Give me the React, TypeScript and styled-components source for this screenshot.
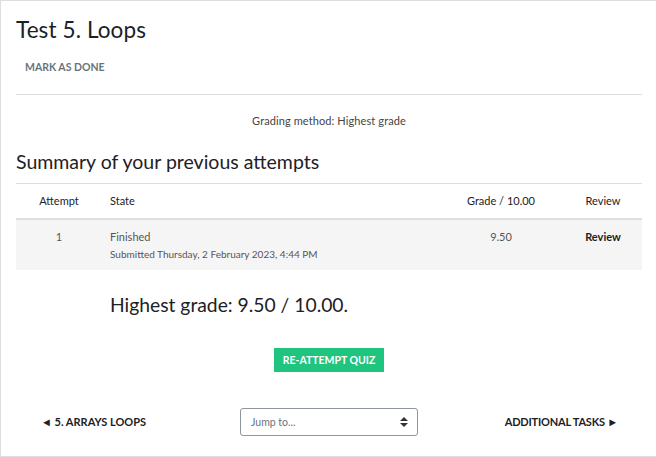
import React from "react";
import styled, { createGlobalStyle } from "styled-components";

const Global = createGlobalStyle`
  html, body { margin: 0; padding: 0; background: #fff; overflow: hidden; }
  body { font-family: Lato, "Open Sans", sans-serif; color: #1d2125; }
`;

const Page = styled.div`
  box-sizing: border-box;
  width: 656px;
  height: 457px;
  border: 1px solid #dedede;
  border-right: none;
  padding: 0 14px 0 15px;
  display: flex;
  flex-direction: column;
`;

const Title = styled.h2`
  margin: 15px 0 0;
  font-size: 22.5px;
  font-weight: 400;
  line-height: 28px;
  letter-spacing: 0.1px;
`;

const DoneButton = styled.button`
  align-self: flex-start;
  margin-top: 13px;
  border: none;
  background: transparent;
  padding: 4px 9px;
  font-family: inherit;
  font-size: 10.5px;
  font-weight: 700;
  color: #6a737b;
  text-transform: uppercase;
`;

const Rule = styled.hr`
  margin: 17px 0 0;
  border: none;
  border-top: 1px solid #dedede;
`;

const Method = styled.p`
  margin: 19px 0 0;
  text-align: center;
  font-size: 11px;
  color: #444;
  line-height: 14px;
  letter-spacing: 0.1px;
`;

const SubTitle = styled.h3`
  margin: 22px 0 0;
  font-size: 19.5px;
  font-weight: 400;
  line-height: 24px;
`;

const Table = styled.table`
  margin-top: 9px;
  width: 100%;
  border-collapse: collapse;
  font-size: 11px;
  table-layout: fixed;
`;

const HeadCell = styled.th<{ $align?: string; $w?: number }>`
  box-sizing: border-box;
  width: ${(p) => (p.$w ? `${p.$w}px` : "auto")};
  text-align: ${(p) => p.$align || "left"};
  font-weight: 400;
  color: #1d2125;
  padding: 0 8px;
  height: 35px;
  border-top: 1px solid #dedede;
  border-bottom: 2px solid #dedede;
`;

const Row = styled.tr`
  background: #f5f5f5;
`;

const Cell = styled.td<{ $align?: string; $bold?: boolean }>`
  text-align: ${(p) => p.$align || "left"};
  vertical-align: top;
  padding: 10px 8px 0;
  height: 51px;
  box-sizing: border-box;
  line-height: 14px;
  color: ${(p) => (p.$bold ? "#1d2125" : "#555")};
  font-weight: ${(p) => (p.$bold ? 700 : 400)};
`;

const Sub = styled.div`
  margin-top: 3px;
  font-size: 10px;
  color: #555;
`;

const Highest = styled.h3`
  margin: 23px 0 0 94px;
  font-size: 19.3px;
  font-weight: 400;
  line-height: 24px;
`;

const Attempt = styled.button`
  align-self: center;
  margin: 31px 0 0 0;
  border: none;
  background: #1fc47f;
  color: #fff;
  font-family: inherit;
  font-size: 10.5px;
  font-weight: 700;
  padding: 0 9px;
  height: 24px;
`;

const Nav = styled.div`
  margin-top: 36px;
  display: grid;
  grid-template-columns: 1fr 178px 1fr;
  align-items: center;
`;

const NavLink = styled.a<{ $right?: boolean }>`
  justify-self: ${(p) => (p.$right ? "end" : "start")};
  margin: ${(p) => (p.$right ? "0 24px 0 0" : "0 0 0 25px")};
  font-size: 11px;
  font-weight: 700;
  color: #1d2125;
  text-decoration: none;
  letter-spacing: ${(p) => (p.$right ? "-0.2px" : "0")};
`;

const Select = styled.div`
  box-sizing: border-box;
  height: 28px;
  border: 1px solid #8f959e;
  border-radius: 3px;
  display: flex;
  align-items: center;
  justify-content: space-between;
  padding: 0 9px 0 10px;
  font-size: 10.5px;
  color: #6a737b;
`;

const Arrows = () => (
  <svg width="8" height="10" viewBox="0 0 8 10">
    <path d="M4 0 L8 4 H0 Z M4 10 L8 6 H0 Z" fill="#333" />
  </svg>
);

export default function App() {
  return (
    <>
      <Global />
      <Page>
        <Title>Test 5. Loops</Title>
        <DoneButton>Mark as done</DoneButton>
        <Rule />
        <Method>Grading method: Highest grade</Method>
        <SubTitle>Summary of your previous attempts</SubTitle>
        <Table>
          <thead>
            <tr>
              <HeadCell $align="center" $w={86}>Attempt</HeadCell>
              <HeadCell>State</HeadCell>
              <HeadCell $align="center" $w={126}>Grade / 10.00</HeadCell>
              <HeadCell $align="center" $w={78}>Review</HeadCell>
            </tr>
          </thead>
          <tbody>
            <Row>
              <Cell $align="center">1</Cell>
              <Cell>
                Finished
                <Sub>Submitted Thursday, 2 February 2023, 4:44 PM</Sub>
              </Cell>
              <Cell $align="center">9.50</Cell>
              <Cell $align="center" $bold>Review</Cell>
            </Row>
          </tbody>
        </Table>
        <Highest>Highest grade: 9.50 / 10.00.</Highest>
        <Attempt>RE-ATTEMPT QUIZ</Attempt>
        <Nav>
          <NavLink href="#">◄ 5. ARRAYS LOOPS</NavLink>
          <Select>
            <span>Jump to...</span>
            <Arrows />
          </Select>
          <NavLink href="#" $right>ADDITIONAL TASKS ►</NavLink>
        </Nav>
      </Page>
    </>
  );
}
